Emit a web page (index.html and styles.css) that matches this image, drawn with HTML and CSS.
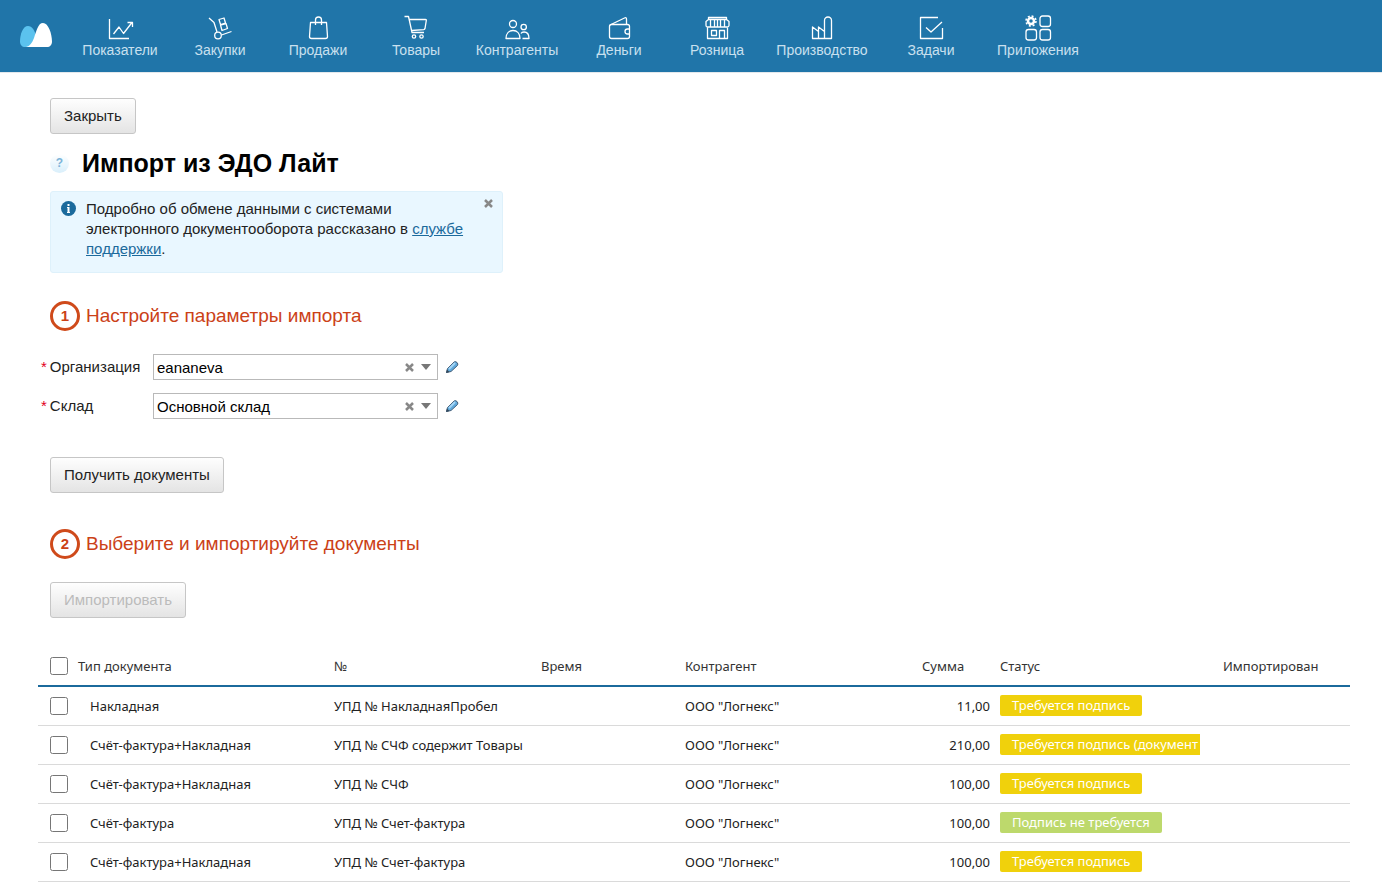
FILE: index.html
```html
<!DOCTYPE html>
<html lang="ru">
<head>
	<meta charset="utf-8" />
	<title>Импорт из ЭДО Лайт</title>
	<link rel="stylesheet" href="styles.css">
</head>
<body>
<header class="topbar">
	<a href="#" class="logo" aria-label="МойСклад">
		<svg width="32" height="24" viewBox="0 0 32 24">
			<path fill="#5bc2ee" d="M5 24C2 24 0 22 0 18.500C0 11 3 3 8 3c4 0 7 4 8 11L12 24z"/>
			<path fill="#fff" d="M6 24c4-1 6-4 8-9C16.500 8 18 0 23 0c5.500 0 9 11 9 18.500 0 3.500-2 5.500-5 5.500z"/>
		</svg>
	</a>
	<nav class="menu">
		<a href="#">
			<svg viewBox="0 0 30 28"><path d="M4.500 5v19.500H24M8.500 20l5.500-7 4.500 6.500L27 8.500M22.500 8.500H27.500V13"/></svg>
			<span>Показатели</span>
		</a>
		<a href="#">
			<svg viewBox="0 0 30 28"><path d="M4 4l5 4.500 3 9.500M16.500 21l10-3.500M14 5.500l5-1.500 1.500 5-5 1.500zM15.500 11l5.500-1.500 1.500 5-5.500 2z"/><circle cx="13" cy="21.500" r="3.300"/></svg>
			<span>Закупки</span>
		</a>
		<a href="#">
			<svg viewBox="0 0 30 28"><path d="M7.500 8.500h16l1 14q0 2-2 2h-14q-2 0-2-2zM12.500 11V6a3 3 0 0 1 6 0v5"/></svg>
			<span>Продажи</span>
		</a>
		<a href="#">
			<svg viewBox="0 0 30 28"><path d="M3.500 2.500h4L11 18.500h12M8.500 5.500h16q1 0 .8 1L24 14.500q-.3 1-1.300 1.200L10.500 16.500"/><circle cx="13" cy="22.500" r="1.700"/><circle cx="20.500" cy="22.500" r="1.700"/></svg>
			<span>Товары</span>
		</a>
		<a href="#">
			<svg viewBox="0 0 30 28"><circle cx="11" cy="10" r="3.500"/><path d="M4 24.500c0-5 3-8 7-8s7 3 7 8zM20.500 24.500H27c0-4-2-6.500-5-6.500-1.500 0-2.500.500-3 1.500"/><circle cx="21.700" cy="13" r="2.700"/></svg>
			<span>Контрагенты</span>
		</a>
		<a href="#">
			<svg viewBox="0 0 30 28"><rect x="5.500" y="10.500" width="20" height="14" rx="2"/><path d="M6 11L20.500 4q2-1 2 1v5.500M25.500 15H23.500a2.500 2.500 0 0 0 0 5h2"/></svg>
			<span>Деньги</span>
		</a>
		<a href="#">
			<svg viewBox="0 0 30 28"><path d="M6.500 3.500h18v2h-18zM6.500 5.500L4 7.500v4q0 1.500 1.500 1.500H25q2 0 2-1.500v-4l-2.500-2M8.500 6v7M12.500 6v7M15.500 6v7M18.500 6v7M22.500 6v7M5.500 13v11.500h20V13M9.500 16.500h5v5h-5zM17.500 24.500v-8h5v8"/></svg>
			<span>Розница</span>
		</a>
		<a href="#">
			<svg viewBox="0 0 30 28"><path d="M5.500 24.500V13l6 4.500V13l6 4.500V6.500a3.500 3.500 0 0 1 7 0v18zM11.500 17.500v7M17.500 17.500v7"/></svg>
			<span>Производство</span>
		</a>
		<a href="#">
			<svg viewBox="0 0 30 28"><path d="M22 3.500H4.500v21h22V14M10 13.500l5 4.500L26 8"/></svg>
			<span>Задачи</span>
		</a>
		<a href="#">
			<svg viewBox="0 0 30 28"><rect x="17" y="2" width="10.500" height="10.500" rx="2.500"/><rect x="3" y="15.500" width="10.500" height="10.500" rx="2.500"/><rect x="17" y="15.500" width="10.500" height="10.500" rx="2.500"/><circle cx="8" cy="7" r="3" stroke-width="2.500"/><circle cx="8" cy="7" r="5" stroke-width="1.500" stroke-dasharray="2 1.930"/></svg>
			<span>Приложения</span>
		</a>
	</nav>
</header>

<main class="content">
	<button type="button" class="btn">Закрыть</button>

	<div class="title">
		<button type="button" class="help" aria-label="Справка">?</button>
		<h1>Импорт из ЭДО Лайт</h1>
	</div>

	<div class="info">
		<svg class="info-icon" width="15" height="15" viewBox="0 0 15 15"><circle cx="7.500" cy="7.500" r="7.500" fill="#1b6a9c"/><path d="M6.500 3h2v2h-2zM6 6h2.500v5H9v1H6v-1h.5V7H6z" fill="#fff"/></svg>
		<p>Подробно об обмене данными с системами электронного документооборота рассказано в <a href="#">службе поддержки</a>.</p>
		<button type="button" class="cross" aria-label="Скрыть">
			<svg width="9" height="9" viewBox="0 0 9 9"><path d="M1 1l7 7M8 1L1 8"/></svg>
		</button>
	</div>

	<h2><span class="step">1</span>Настройте параметры импорта</h2>

	<div class="field">
		<label for="org">Организация</label>
		<div class="combo">
			<input type="text" id="org" value="eananeva">
			<button type="button" class="cross" aria-label="Очистить"><svg width="9" height="9" viewBox="0 0 9 9"><path d="M1 1l7 7M8 1L1 8"/></svg></button>
			<button type="button" class="arrow" aria-label="Выбрать"></button>
		</div>
		<button type="button" class="edit" aria-label="Изменить">
			<svg width="14" height="14" viewBox="0 0 14 14"><path d="M1.500 12.500l1-4L9 2q1.500-1 3 .500t.500 3L6 11.500z" fill="#5fa9dc" stroke="#45607a"/><path d="M4 9l6-6" stroke="#a5d5f5" stroke-width="2"/><path d="M1 13l1-3.500L4.500 12z" fill="#34495c"/></svg>
		</button>
	</div>
	<div class="field">
		<label for="store">Склад</label>
		<div class="combo">
			<input type="text" id="store" value="Основной склад">
			<button type="button" class="cross" aria-label="Очистить"><svg width="9" height="9" viewBox="0 0 9 9"><path d="M1 1l7 7M8 1L1 8"/></svg></button>
			<button type="button" class="arrow" aria-label="Выбрать"></button>
		</div>
		<button type="button" class="edit" aria-label="Изменить">
			<svg width="14" height="14" viewBox="0 0 14 14"><path d="M1.500 12.500l1-4L9 2q1.500-1 3 .500t.500 3L6 11.500z" fill="#5fa9dc" stroke="#45607a"/><path d="M4 9l6-6" stroke="#a5d5f5" stroke-width="2"/><path d="M1 13l1-3.500L4.500 12z" fill="#34495c"/></svg>
		</button>
	</div>

	<button type="button" class="btn btn-get">Получить документы</button>

	<h2><span class="step">2</span>Выберите и импортируйте документы</h2>

	<button type="button" class="btn btn-import" disabled>Импортировать</button>
</main>

<table class="docs">
	<colgroup>
		<col class="c-check"><col class="c-type"><col class="c-num"><col class="c-time"><col class="c-agent"><col class="c-sum"><col class="c-status"><col>
	</colgroup>
	<thead>
		<tr>
			<th><input type="checkbox" aria-label="Выбрать все"></th>
			<th>Тип документа</th>
			<th>№</th>
			<th>Время</th>
			<th>Контрагент</th>
			<th>Сумма</th>
			<th>Статус</th>
			<th>Импортирован</th>
		</tr>
	</thead>
	<tbody>
		<tr>
			<td><input type="checkbox" aria-label="Выбрать"></td>
			<td class="type">Накладная</td>
			<td>УПД № НакладнаяПробел</td>
			<td></td>
			<td>ООО "Логнекс"</td>
			<td class="sum">11,00</td>
			<td><div class="clip"><span class="status">Требуется подпись</span></div></td>
			<td></td>
		</tr>
		<tr>
			<td><input type="checkbox" aria-label="Выбрать"></td>
			<td class="type">Счёт-фактура+Накладная</td>
			<td>УПД № СЧФ содержит Товары</td>
			<td></td>
			<td>ООО "Логнекс"</td>
			<td class="sum">210,00</td>
			<td><div class="clip"><span class="status">Требуется подпись (документ</span></div></td>
			<td></td>
		</tr>
		<tr>
			<td><input type="checkbox" aria-label="Выбрать"></td>
			<td class="type">Счёт-фактура+Накладная</td>
			<td>УПД № СЧФ</td>
			<td></td>
			<td>ООО "Логнекс"</td>
			<td class="sum">100,00</td>
			<td><div class="clip"><span class="status">Требуется подпись</span></div></td>
			<td></td>
		</tr>
		<tr>
			<td><input type="checkbox" aria-label="Выбрать"></td>
			<td class="type">Счёт-фактура</td>
			<td>УПД № Счет-фактура</td>
			<td></td>
			<td>ООО "Логнекс"</td>
			<td class="sum">100,00</td>
			<td><div class="clip"><span class="status green">Подпись не требуется</span></div></td>
			<td></td>
		</tr>
		<tr>
			<td><input type="checkbox" aria-label="Выбрать"></td>
			<td class="type">Счёт-фактура+Накладная</td>
			<td>УПД № Счет-фактура</td>
			<td></td>
			<td>ООО "Логнекс"</td>
			<td class="sum">100,00</td>
			<td><div class="clip"><span class="status">Требуется подпись</span></div></td>
			<td></td>
		</tr>
	</tbody>
</table>
</body>
</html>
```
FILE: styles.css
```css
*{
margin:0;
padding:0;
box-sizing:border-box;
}
body{
background:#fff;
color:#222;
font:15px/20px "Liberation Sans",Arial,sans-serif;
}
button,input{
font:inherit;
color:inherit;
}
button{
border:0;
background:none;
}

/* верхнее меню */
.topbar{
display:flex;
height:72px;
background:#2075a9;
box-shadow:0 1px 0 #e3e8ec;
}
.logo{
width:69px;
padding:23px 0 0 20px;
}
.logo svg{
display:block;
}
.menu{
display:grid;
grid-template-columns:102px 98px 98px 98px 104px 100px 96px 114px 104px 110px;
}
.menu a{
display:flex;
flex-direction:column;
align-items:center;
padding-top:14px;
color:#c9e0ef;
font-size:14px;
line-height:16px;
text-decoration:none;
}
.menu svg{
width:30px;
height:28px;
fill:none;
stroke:#fff;
stroke-width:1.3;
stroke-linejoin:round;
}

.content{
padding:26px 50px 0;
}
.btn{
display:block;
height:36px;
padding:0 13px;
border:1px solid #c6c6c6;
border-radius:3px;
background:linear-gradient(#fefefe,#e4e4e4);
}
.btn:disabled{
color:#bbb;
}
.title{
display:flex;
align-items:center;
gap:13px;
height:30px;
margin:14px 0 13px;
}
.title h1{
color:#000;
font-size:25px;
line-height:30px;
}
.help{
width:19px;
height:19px;
border-radius:50%;
background:linear-gradient(#fff,#d9effb);
color:#7db4d8;
font-size:12px;
font-weight:bold;
line-height:19px;
}
.info{
display:flex;
align-items:flex-start;
width:453px;
height:82px;
max-width:100%;
padding:7px 9px 0 10px;
border:1px solid #def1fb;
border-radius:3px;
background:#e9f7ff;
}
.info-icon{
flex:none;
margin:2px 10px 0 0;
}
.info p{
flex:1;
padding-right:16px;
}
.info a{
color:#1b6a9c;
}
.cross{
display:block;
}
.cross svg{
display:block;
fill:none;
stroke:#888;
stroke-width:2.5;
}
h2{
display:flex;
align-items:center;
gap:6px;
margin-top:28px;
color:#cb4117;
font-size:19px;
font-weight:normal;
line-height:30px;
}
.step{
width:30px;
height:30px;
border:3px solid #cf4a1b;
border-radius:50%;
font-size:15px;
font-weight:bold;
line-height:24px;
text-align:center;
}

/* поля */
.field{
display:flex;
align-items:center;
margin-top:13px;
}
h2 + .field{
margin-top:23px;
}
.field label{
width:112px;
margin-left:-9px;
}
.field label::before{
content:"*";
margin-right:3px;
color:#e2001a;
}
.combo{
display:flex;
align-items:center;
width:285px;
height:26px;
padding:0 6px 0 3px;
border:1px solid #b9b9b9;
}
.combo input{
flex:1;
min-width:0;
height:24px;
border:0;
outline:0;
background:none;
color:#000;
}
.combo .arrow{
width:0;
height:0;
margin-left:7px;
border:5px solid transparent;
border-top:6px solid #777;
border-bottom:0;
}
.edit{
margin-left:7px;
}
.edit svg{
display:block;
fill:none;
}
.btn-get{
margin:38px 0 36px;
}
.content .btn-get + h2{
margin-top:0;
}
.btn-import{
margin-top:23px;
}

/* таблица документов */
.docs{
width:calc(100% - 70px);
margin:29px 32px 0 38px;
border-collapse:collapse;
table-layout:fixed;
font:13px/20px "Noto Sans",Tahoma,sans-serif;
}
.c-check{width:35px;}
.c-type{width:256px;}
.c-num{width:207px;}
.c-time{width:144px;}
.c-agent{width:237px;}
.c-sum{width:78px;}
.c-status{width:223px;}
.docs th,
.docs td{
height:39px;
padding:0 5px;
border-bottom:1px solid #dadada;
text-align:left;
white-space:nowrap;
vertical-align:middle;
}
.docs th{
border-bottom:2px solid #1b6a9c;
color:#333;
font-weight:normal;
}
.docs input{
display:block;
width:18px;
height:18px;
margin-left:7px;
}
.docs .type{
padding-left:17px;
}
.docs .sum{
text-align:right;
}
.clip{
max-width:200px;
overflow:hidden;
}
.status{
display:inline-block;
height:21px;
padding:0 12px;
border-radius:2px;
background:#f0d10c;
color:#fff;
vertical-align:top;
}
.status.green{
background:#bdd96c;
}
```
